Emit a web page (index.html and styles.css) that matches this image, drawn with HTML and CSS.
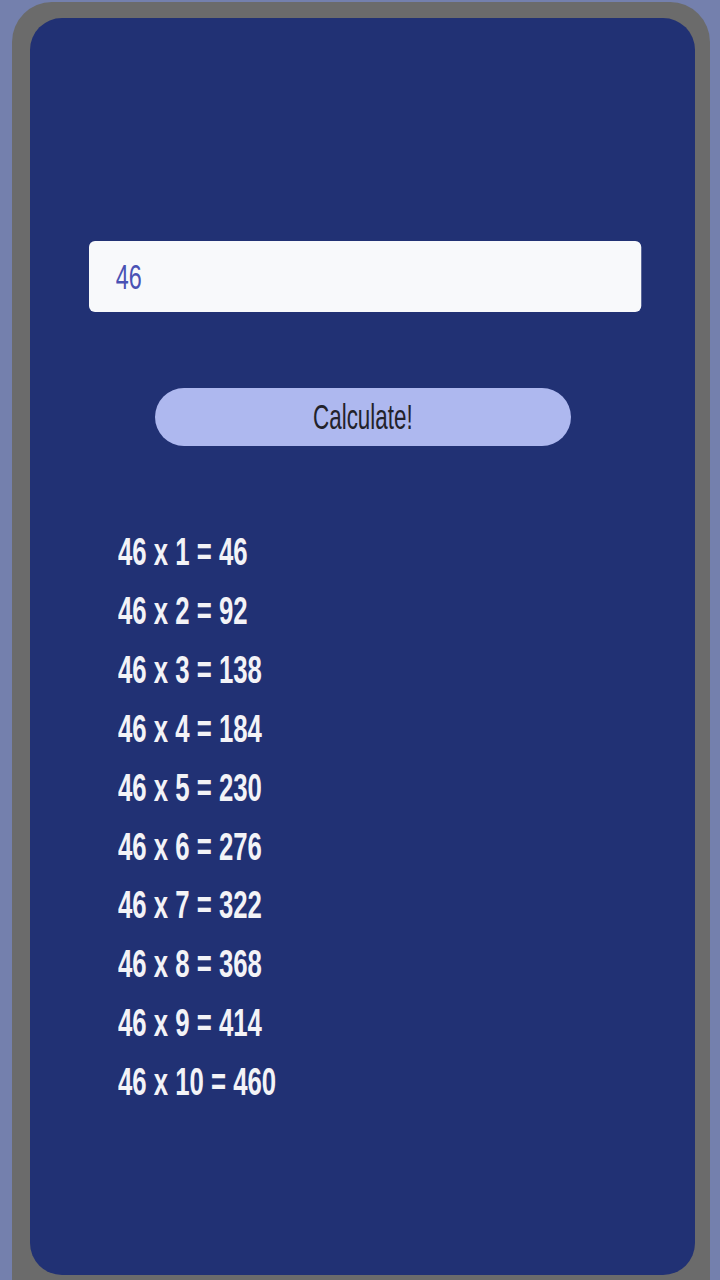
FILE: index.html
```html
<!DOCTYPE html>
<html lang="en">
<head>
<meta charset="utf-8">
<title>Multiplication table</title>
<link rel="stylesheet" href="styles.css">
</head>
<body>
<div class="frame">
  <div class="screen">
    <div class="field">
      <input class="num" type="text" value="46">
    </div>
    <button class="calc"><span class="squeeze">Calculate!</span></button>
    <ul class="table">
      <li><span class="squeeze">46 x 1 = 46</span></li>
      <li><span class="squeeze">46 x 2 = 92</span></li>
      <li><span class="squeeze">46 x 3 = 138</span></li>
      <li><span class="squeeze">46 x 4 = 184</span></li>
      <li><span class="squeeze">46 x 5 = 230</span></li>
      <li><span class="squeeze">46 x 6 = 276</span></li>
      <li><span class="squeeze">46 x 7 = 322</span></li>
      <li><span class="squeeze">46 x 8 = 368</span></li>
      <li><span class="squeeze">46 x 9 = 414</span></li>
      <li><span class="squeeze">46 x 10 = 460</span></li>
    </ul>
  </div>
</div>
</body>
</html>
```

FILE: styles.css
```css
html, body {
  margin: 0;
  padding: 0;
  height: 100%;
  overflow: hidden;
  background: #7480ad;
  font-family: "Liberation Sans", Arial, sans-serif;
}

.frame {
  margin: 2px 10px 0 12px;
  padding: 16px 15px 0 18px;
  height: 1300px;
  background: #6b6b6b;
  border-radius: 40px 40px 0 0;
}

.screen {
  height: 1257px;
  box-sizing: border-box;
  padding-top: 223px;
  background: #213174;
  border-radius: 32px;
  display: flex;
  flex-direction: column;
  align-items: flex-start;
}

.field {
  margin-left: 59px;
  width: 552px;
  height: 71px;
  overflow: visible;
}

.num {
  display: block;
  width: 828px;
  height: 71px;
  box-sizing: border-box;
  padding: 0 0 0 40px;
  border: none;
  border-radius: 9px / 6px;
  background: #f8f9fb;
  color: #4a52b4;
  font-family: inherit;
  font-size: 35px;
  outline: none;
  transform: scaleX(0.667);
  transform-origin: left center;
}

.calc {
  margin: 76px 0 0 125px;
  width: 416px;
  height: 58px;
  border: none;
  border-radius: 29px;
  background: #aeb8ef;
  color: #23222a;
  font-family: inherit;
  font-size: 35px;
  padding: 0;
  display: flex;
  align-items: center;
  justify-content: center;
}

.squeeze {
  display: inline-block;
  transform: scaleX(0.66);
  transform-origin: left center;
  white-space: nowrap;
}

.calc .squeeze {
  transform: scaleX(0.64);
  transform-origin: center;
}

.table {
  list-style: none;
  margin: 77px 0 0 88px;
  padding: 0;
  color: #f3f3f7;
  font-weight: bold;
  font-size: 39px;
  line-height: 58.9px;
}
```
